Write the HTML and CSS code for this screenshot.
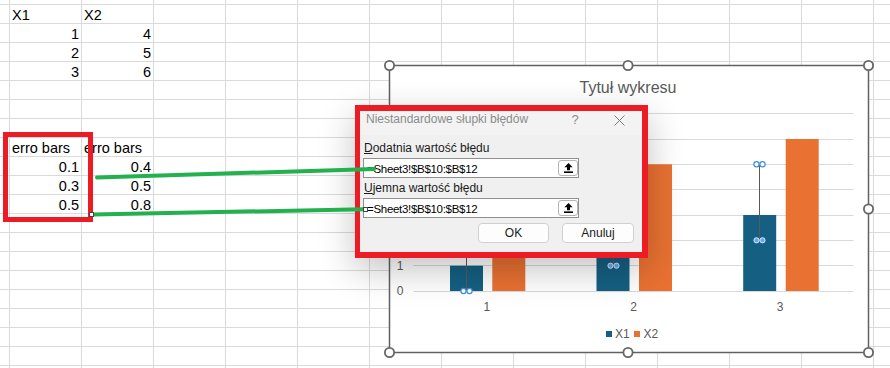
FILE: index.html
```html
<!DOCTYPE html>
<html lang="pl">
<head>
  <meta charset="UTF-8" />
  <title>Niestandardowe słupki błędów</title>
  <link rel="stylesheet" href="styles.css">
</head>
<body>

<div class="sheet">
  <div class="cells">
    <div class="cell c1">X1</div>
    <div class="cell c2">X2</div>
    <div class="cell c1 num">1</div>
    <div class="cell c2 num">4</div>
    <div class="cell c1 num">2</div>
    <div class="cell c2 num">5</div>
    <div class="cell c1 num">3</div>
    <div class="cell c2 num">6</div>
    <div class="gap-row"></div>
    <div class="cell c1">erro bars</div>
    <div class="cell c2">erro bars</div>
    <div class="cell c1 num">0.1</div>
    <div class="cell c2 num">0.4</div>
    <div class="cell c1 num">0.3</div>
    <div class="cell c2 num">0.5</div>
    <div class="cell c1 num">0.5</div>
    <div class="cell c2 num">0.8</div>
  </div>
</div>

<!-- chart object, coords are page minus (384, 60) -->
<div class="chart">
  <svg width="490" height="298" viewBox="0 0 490 298">
    <rect x="5.5" y="5.5" width="479" height="287" fill="#fff" stroke="#616161" stroke-width="1.5"/>
    <text class="chart-title" x="244" y="33" text-anchor="middle">Tytuł wykresu</text>

    <g stroke="#d9d9d9" stroke-width="1">
      <line x1="29.5" x2="469.5" y1="231.5" y2="231.5"/>
      <line x1="29.5" x2="469.5" y1="205.5" y2="205.5"/>
      <line x1="29.5" x2="469.5" y1="180.5" y2="180.5"/>
      <line x1="29.5" x2="469.5" y1="155.5" y2="155.5"/>
      <line x1="29.5" x2="469.5" y1="129.5" y2="129.5"/>
      <line x1="29.5" x2="469.5" y1="104.5" y2="104.5"/>
      <line x1="29.5" x2="469.5" y1="79.5" y2="79.5"/>
      <line x1="29.5" x2="469.5" y1="53.5" y2="53.5"/>
    </g>

    <!-- labels 2..7 sit under the dialog -->
    <g class="axis-label" text-anchor="end">
      <text x="19.5" y="235">0</text>
      <text x="19.5" y="210">1</text>
    </g>

    <g fill="#156082">
      <rect x="66" y="205.7" width="33" height="25.3"/>
      <rect x="212.5" y="180.3" width="33" height="50.7"/>
      <rect x="359.2" y="155" width="33" height="76"/>
    </g>
    <g fill="#e97132">
      <rect x="108.3" y="129.7" width="33" height="101.3"/>
      <rect x="255" y="104.3" width="33" height="126.7"/>
      <rect x="401.7" y="79" width="33" height="152"/>
    </g>

    <g stroke="#595959" stroke-width="1">
      <line x1="82.5" x2="82.5" y1="155" y2="231"/>
      <line x1="229.5" x2="229.5" y1="129.7" y2="205.7"/>
      <line x1="375.5" x2="375.5" y1="104.3" y2="180.3"/>
    </g>

    <g class="marker-ring">
      <circle cx="79.5" cy="231" r="2.6"/>
      <circle cx="85.5" cy="231" r="2.6"/>
      <circle cx="372.5" cy="104.3" r="2.6"/>
      <circle cx="378.5" cy="104.3" r="2.6"/>
    </g>
    <g class="marker-dot">
      <circle cx="226.5" cy="205.7" r="2.6"/>
      <circle cx="232.5" cy="205.7" r="2.6"/>
      <circle cx="372.5" cy="180.3" r="2.6"/>
      <circle cx="378.5" cy="180.3" r="2.6"/>
    </g>

    <g class="axis-label" text-anchor="middle">
      <text x="102.8" y="251">1</text>
      <text x="249.5" y="251">2</text>
      <text x="396.2" y="251">3</text>
    </g>

    <rect x="222" y="271" width="6" height="6" fill="#156082"/>
    <text class="axis-label" x="231" y="278">X1</text>
    <rect x="250" y="271" width="6" height="6" fill="#e97132"/>
    <text class="axis-label" x="259.5" y="278">X2</text>

    <g class="handle">
      <circle cx="5.5" cy="5.5" r="4.6"/>
      <circle cx="244" cy="5.5" r="4.6"/>
      <circle cx="484.5" cy="5.5" r="4.6"/>
      <circle cx="5.5" cy="149" r="4.6"/>
      <circle cx="484.5" cy="149" r="4.6"/>
      <circle cx="5.5" cy="292.5" r="4.6"/>
      <circle cx="244" cy="292.5" r="4.6"/>
      <circle cx="484.5" cy="292.5" r="4.6"/>
    </g>
  </svg>
</div>

<div class="dialog">
  <div class="dialog-title">
    <span class="title-text">Niestandardowe słupki błędów</span>
    <span class="title-help">?</span>
    <span class="title-close">
      <svg width="11" height="11" viewBox="0 0 11 11">
        <path d="M0.5 0.5 L10.5 10.5 M10.5 0.5 L0.5 10.5" stroke="#7a7a7a" stroke-width="1"/>
      </svg>
    </span>
  </div>
  <div class="dialog-body">
    <div class="field-label"><u>D</u>odatnia wartość błędu</div>
    <div class="range-input">
      <span class="range-value">=Sheet3!$B$10:$B$12</span>
      <span class="collapse-btn">
        <svg width="9" height="10" viewBox="0 0 9 10">
          <path d="M4.5 0 L8.6 4.3 H6 V7.2 H3 V4.3 H0.4 Z" fill="#000"/>
          <rect x="0" y="8.4" width="9" height="1.6" fill="#000"/>
        </svg>
      </span>
    </div>
    <div class="field-label second"><u>U</u>jemna wartość błędu</div>
    <div class="range-input">
      <span class="range-value">=Sheet3!$B$10:$B$12</span>
      <span class="collapse-btn">
        <svg width="9" height="10" viewBox="0 0 9 10">
          <path d="M4.5 0 L8.6 4.3 H6 V7.2 H3 V4.3 H0.4 Z" fill="#000"/>
          <rect x="0" y="8.4" width="9" height="1.6" fill="#000"/>
        </svg>
      </span>
    </div>
    <div class="dialog-buttons">
      <button class="btn btn-ok">OK</button>
      <button class="btn btn-cancel">Anuluj</button>
    </div>
  </div>
</div>

<!-- hand drawn markings on top of the screenshot -->
<svg class="annotations" width="890" height="368" viewBox="0 0 890 368">
  <rect x="5.5" y="134.5" width="85" height="85" fill="none" stroke="#ed1c24" stroke-width="5"/>
  <path d="M97 177.5 L374 169" stroke="#22b14c" stroke-width="4" stroke-linecap="round"/>
  <path d="M93 214.5 L364 209.3" stroke="#22b14c" stroke-width="4"/>
  <rect x="89.5" y="212.5" width="4" height="4" fill="#fff" stroke="#444" stroke-width="1"/>
  <rect x="363.5" y="207.5" width="4" height="4" fill="#fff" stroke="#444" stroke-width="1"/>
</svg>

</body>
</html>
```

FILE: styles.css
```css
body {
  margin: 0;
  width: 890px;
  height: 368px;
  overflow: hidden;
  position: relative;
  background-color: #fff;
  font-family: "Liberation Sans", Arial, sans-serif;
  color: #000;
}

.sheet {
  height: 368px;
  background-image:
    linear-gradient(to right, #dadada 1px, transparent 1px),
    linear-gradient(to bottom, #dadada 1px, transparent 1px);
  background-size: 72px 19px;
  background-position: 9px 4px;
}

.cells {
  display: grid;
  grid-template-columns: 10px 72px 72px;
  grid-auto-rows: 19px;
  padding-top: 5px;
  font-size: 14.5px;
}

.cell {
  line-height: 21px;
  white-space: nowrap;
  padding: 0 3px 0 2px;
}

.c1 {
  grid-column: 2;
}

.c2 {
  grid-column: 3;
}

.num {
  text-align: right;
}

.gap-row {
  grid-column: 1 / -1;
  grid-row: span 3;
}

/* chart */

.chart {
  position: absolute;
  left: 384px;
  top: 60px;
  width: 490px;
  height: 298px;
}

.chart svg {
  display: block;
}

.chart-title {
  font-size: 16px;
  fill: #595959;
}

.axis-label {
  font-size: 12px;
  fill: #595959;
}

.marker-ring circle {
  fill: #fff;
  stroke: #3f8fdc;
  stroke-width: 1.2;
}

.marker-dot circle {
  fill: #62aaf0;
  stroke: #d6eafc;
  stroke-width: 1;
}

.handle circle {
  fill: #fff;
  stroke: #666;
  stroke-width: 1.8;
}

/* dialog */

.dialog {
  position: absolute;
  left: 355px;
  top: 105px;
  width: 293px;
  height: 153px;
  box-sizing: border-box;
  border: 6px solid #ed1c24;
  border-left-width: 5px;
  background-color: #f0f0f0;
  box-shadow: 0 12px 34px rgba(0, 0, 0, 0.24);
  font-size: 12px;
}

.dialog-title {
  display: flex;
  height: 24px;
  line-height: 17px;
  padding: 0 8px 0 6px;
  background-color: #f3f3f3;
  color: #8b8b8b;
}

.title-text {
  flex: 1;
}

.title-help {
  width: 20px;
  text-align: center;
  font-size: 13px;
  margin-right: 19px;
}

.title-close {
  width: 30px;
  display: flex;
  justify-content: center;
  padding-top: 4px;
  height: 11px;
}

.dialog-body {
  display: flex;
  flex-direction: column;
  padding: 0 8px 0 3px;
}

.field-label {
  margin-top: 6px;
  padding-left: 1px;
  line-height: 15px;
  color: #1a1a1a;
}

.field-label.second {
  margin-top: 3px;
}

.range-input {
  display: flex;
  align-items: center;
  margin-top: 2px;
  width: 216px;
  height: 20px;
  box-sizing: border-box;
  border: 1px solid #8f8f8f;
  background-color: #fff;
  padding: 0 0 0 3px;
}

.range-value {
  flex: 1;
  font-size: 11.5px;
  letter-spacing: -0.3px;
  line-height: 18px;
  padding-top: 2px;
}

.collapse-btn {
  width: 20px;
  height: 16px;
  box-sizing: border-box;
  border: 1px solid #b4b4b4;
  border-radius: 3px;
  background-color: #fdfdfd;
  display: flex;
  justify-content: center;
  align-items: center;
}

.dialog-buttons {
  display: flex;
  justify-content: flex-end;
  gap: 13px;
  margin-top: 5px;
}

.btn {
  height: 20px;
  padding: 0;
  border: 1px solid #d0d0d0;
  border-radius: 4px;
  background-color: #fdfdfd;
  font-family: "Liberation Sans", Arial, sans-serif;
  font-size: 12px;
  color: #1a1a1a;
}

.btn-ok {
  width: 71px;
}

.btn-cancel {
  width: 72px;
}

.annotations {
  position: absolute;
  left: 0;
  top: 0;
}
```
